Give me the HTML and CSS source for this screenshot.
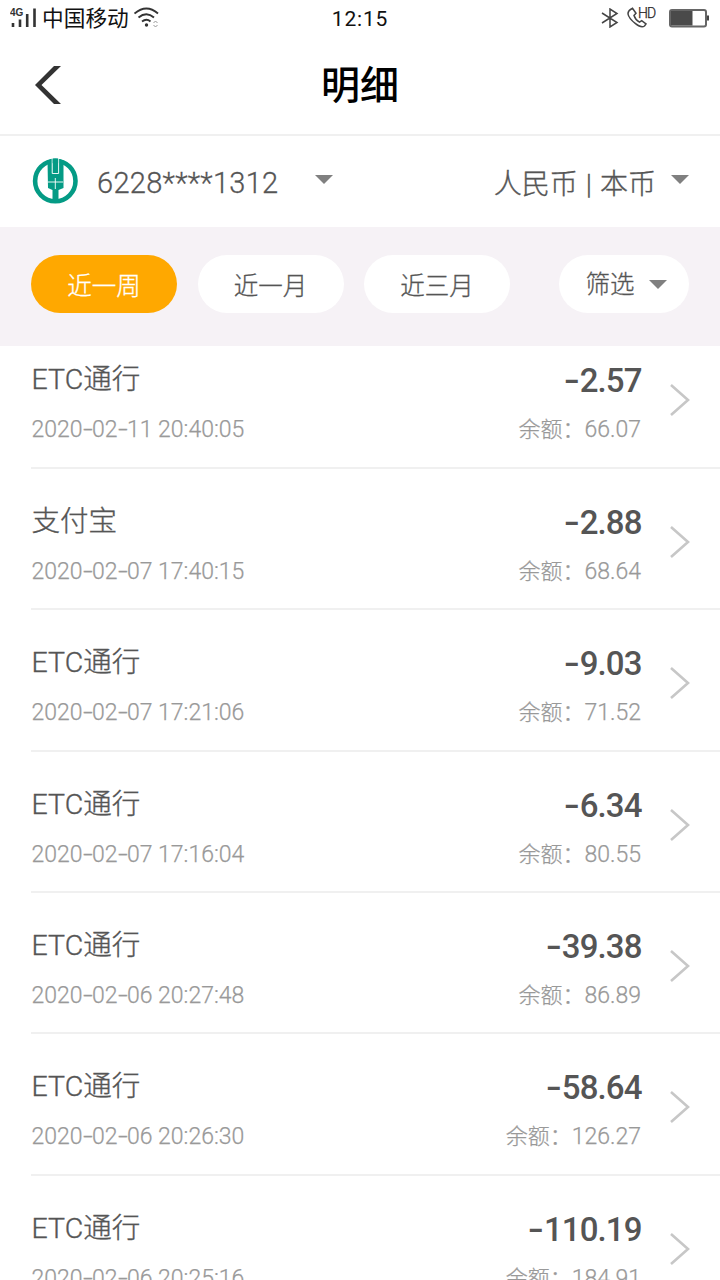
FILE: index.html
```html
<!DOCTYPE html>
<html lang="zh-CN">
<head>
<meta charset="utf-8">
<title>明细</title>
<link rel="stylesheet" href="styles.css">
</head>
<body>
<div class="screen">
  <div class="status">
    <div class="status-left">
      <svg class="signal" width="28" height="22" viewBox="0 0 28 22"><text class="net" x="0" y="8.500">4G</text><path d="M3 16v4M10 12.500v7.500M17.200 7v13M24.500 1.500v18.500" stroke="#333" stroke-width="2.600"/></svg>
      <span class="carrier">中国移动</span>
      <svg class="wifi" width="26" height="22" viewBox="0 0 26 22" fill="none" stroke="#333" stroke-width="1.900"><path d="M.5 6.500Q12.500-3.500 24 6.500M4.500 10.500Q12.500 4 20 10.500M8 14.500Q12.500 11 16.500 14.500"/><circle cx="12.500" cy="18" r="1.700" fill="#333" stroke="none"/><path d="M19.500 16l2-2 2 2M19.500 18l2 2 2-2" stroke="#999" stroke-width="1"/></svg>
    </div>
    <span class="clock">12:15</span>
    <div class="status-right">
      <svg class="bluetooth" width="18" height="20" viewBox="0 0 18 20" fill="none" stroke="#444" stroke-width="1.500"><path d="M1 5l15 9.500-7 4.500V1l7 4.500L1 15"/></svg>
      <svg class="call" width="29" height="22" viewBox="0 0 29 22"><path d="M3.500 2.500l2-1.200 3.500 5-2 2.200c1 3 2.500 5 5.500 6.700l2.200-1.500 4.300 3.300-1.500 2c-2 1.500-5.500.5-9-2.300S1.500 10 1 7c0-2 .8-3.500 2.500-4.500z" fill="none" stroke="#444" stroke-width="1.500"/><text class="hd" x="11" y="11">HD</text></svg>
      <svg class="battery" width="41" height="19" viewBox="0 0 41 19"><rect x="1" y="1" width="36" height="16.500" rx="2" fill="#fff" stroke="#666" stroke-width="2"/><path d="M2 2h21.500v14.500H2z" fill="#4a4a4a"/><path d="M38 6.500h2v5h-2z" fill="#444"/></svg>
    </div>
  </div>

  <header class="header">
    <svg class="back" width="28" height="40" viewBox="0 0 28 40"><path d="M20 1h7L7.500 20 27 39h-7L1 20z" fill="#333"/></svg>
    <h1 class="title">明细</h1>
  </header>

  <div class="account">
    <svg class="logo" width="46" height="46" viewBox="0 0 46 46"><circle cx="23.300" cy="23" r="20.200" fill="none" stroke="#049b85" stroke-width="4.600"/><path d="M15.500 2.500l4.500-1.700V15h6.600V.8l4.900 1.700V30l-5 2V44h-6V32l-4.500-2z" fill="#049b85"/><path d="M20.200 0v15.500h6.400V0M23.300 20v11M16 24h15" fill="none" stroke="#fff" stroke-width=".9"/><path d="M20.700.5h5.400V15h-5.400z" fill="#049b85"/></svg>
    <span class="card-no">6228****1312</span>
    <svg class="caret" width="18" height="9" viewBox="0 0 18 9"><path d="M0 0h18L9 9z"/></svg>
    <span class="currency">人民币 | 本币</span>
    <svg class="caret" width="18" height="9" viewBox="0 0 18 9"><path d="M0 0h18L9 9z"/></svg>
  </div>

  <nav class="filters">
    <span class="pill active">近一周</span>
    <span class="pill">近一月</span>
    <span class="pill">近三月</span>
    <span class="pill select"><span class="select-label">筛选</span><svg class="caret" width="18" height="9" viewBox="0 0 18 9"><path d="M0 0h18L9 9z"/></svg></span>
  </nav>

  <main class="list">
    <div class="row"><div class="info"><span class="name">ETC通行</span><span class="time">2020<i class="dash">-</i>02<i class="dash">-</i>11 20:40:05</span></div><div class="sum"><span class="amount"><i class="dash">-</i>2.57</span><span class="balance">余额：<span class="num">66.07</span></span></div><svg class="go" width="20" height="32" viewBox="0 0 20 32"><path d="M1 1l17 15L1 31"/></svg></div>
    <div class="row"><div class="info"><span class="name">支付宝</span><span class="time">2020<i class="dash">-</i>02<i class="dash">-</i>07 17:40:15</span></div><div class="sum"><span class="amount"><i class="dash">-</i>2.88</span><span class="balance">余额：<span class="num">68.64</span></span></div><svg class="go" width="20" height="32" viewBox="0 0 20 32"><path d="M1 1l17 15L1 31"/></svg></div>
    <div class="row"><div class="info"><span class="name">ETC通行</span><span class="time">2020<i class="dash">-</i>02<i class="dash">-</i>07 17:21:06</span></div><div class="sum"><span class="amount"><i class="dash">-</i>9.03</span><span class="balance">余额：<span class="num">71.52</span></span></div><svg class="go" width="20" height="32" viewBox="0 0 20 32"><path d="M1 1l17 15L1 31"/></svg></div>
    <div class="row"><div class="info"><span class="name">ETC通行</span><span class="time">2020<i class="dash">-</i>02<i class="dash">-</i>07 17:16:04</span></div><div class="sum"><span class="amount"><i class="dash">-</i>6.34</span><span class="balance">余额：<span class="num">80.55</span></span></div><svg class="go" width="20" height="32" viewBox="0 0 20 32"><path d="M1 1l17 15L1 31"/></svg></div>
    <div class="row"><div class="info"><span class="name">ETC通行</span><span class="time">2020<i class="dash">-</i>02<i class="dash">-</i>06 20:27:48</span></div><div class="sum"><span class="amount"><i class="dash">-</i>39.38</span><span class="balance">余额：<span class="num">86.89</span></span></div><svg class="go" width="20" height="32" viewBox="0 0 20 32"><path d="M1 1l17 15L1 31"/></svg></div>
    <div class="row"><div class="info"><span class="name">ETC通行</span><span class="time">2020<i class="dash">-</i>02<i class="dash">-</i>06 20:26:30</span></div><div class="sum"><span class="amount"><i class="dash">-</i>58.64</span><span class="balance">余额：<span class="num">126.27</span></span></div><svg class="go" width="20" height="32" viewBox="0 0 20 32"><path d="M1 1l17 15L1 31"/></svg></div>
    <div class="row"><div class="info"><span class="name">ETC通行</span><span class="time">2020<i class="dash">-</i>02<i class="dash">-</i>06 20:25:16</span></div><div class="sum"><span class="amount"><i class="dash">-</i>110.19</span><span class="balance">余额：<span class="num">184.91</span></span></div><svg class="go" width="20" height="32" viewBox="0 0 20 32"><path d="M1 1l17 15L1 31"/></svg></div>
  </main>
</div>
</body>
</html>
```
FILE: styles.css
```css
* { box-sizing: border-box; }
body { margin: 0; background: #fff; }
svg { display: block; flex: none; }
.screen {
  display: flex;
  flex-direction: column;
  width: 720px;
  height: 1280px;
  overflow: hidden;
  background: #fff;
  color: #555;
  font-family: Roboto, "Noto Sans CJK SC", sans-serif;
  white-space: nowrap;
}

.status {
  display: grid;
  grid-template-columns: 1fr auto 1fr;
  align-items: center;
  height: 38px;
  flex: none;
  padding: 0 10px;
  color: #111;
}
.status-left, .status-right { display: flex; align-items: center; }
.status-left { margin-top: -2px; }
.status-right { justify-content: flex-end; }
.net { font: bold 10px "Liberation Sans", sans-serif; fill: #333; }
.hd { font: 300 14px Roboto, sans-serif; letter-spacing: -.9px; fill: #222; stroke: #333; stroke-width: .3px; }
.carrier { margin: 2px 0 0 4px; font-size: 21.700px; line-height: 38px; }
.wifi { margin-left: 5px; }
.clock { font-size: 21px; letter-spacing: .8px; line-height: 38px; }
.call { margin: -2px 0 0 8px; }
.bluetooth { margin-top: -3px; }
.battery { margin: -2px 0 0 13px; }

.header {
  display: grid;
  grid-template-columns: 1fr auto 1fr;
  align-items: center;
  height: 98px;
  flex: none;
  padding: 0 34px 2px;
  border-bottom: 2px solid #f0f0f0;
}
.title { margin: 2px 0 0; color: #000; font-size: 39px; font-weight: 500; line-height: 60px; }

.account {
  display: flex;
  align-items: center;
  height: 91px;
  flex: none;
  padding: 0 31px 0 32px;
}
.logo { margin-top: -1px; }
.card-no { width: 218px; margin: 3px 0 0 19px; font-size: 29px; font-weight: 300; letter-spacing: .3px; -webkit-text-stroke: .3px #555; }
.account .caret { margin-top: -4px; }
.caret { fill: #808080; }
.currency { margin: 1px 15px 0 auto; font-size: 28px; font-weight: 300; word-spacing: 1.200px; -webkit-text-stroke: .35px #555; }

.filters {
  display: flex;
  align-items: center;
  gap: 20.500px;
  height: 119px;
  flex: none;
  padding: 0 31px 5px;
  background: #f6f2f6;
}
.pill {
  display: flex;
  align-items: center;
  justify-content: center;
  width: 146px;
  height: 58px;
  border-radius: 29px;
  background: #fff;
  font-size: 24.500px;
  font-weight: 300;
  -webkit-text-stroke: .3px;
}
.active { background: #ffa800; color: #fff; }
.select { gap: 14px; width: 130px; margin-left: auto; padding: 0 0 0 4px; }
.select-label { margin-top: -4px; }

.list { flex: 1; min-height: 0; overflow: hidden; }
.row {
  display: flex;
  height: 141.340px;
  margin-left: 31px;
  padding: 33px 30px 0 0;
  border-bottom: 2px solid #f0f0f0;
}
.row:first-child { margin-top: -19px; height: 142px; }
.info, .sum { display: flex; flex-direction: column; gap: 10px; }
.info { margin-left: .6px; }
.sum { align-items: flex-end; margin-left: auto; }
.name { height: 40px; font-size: 28.500px; font-weight: 300; line-height: 40px; -webkit-text-stroke: .35px #555; }
.time { height: 40px; color: #999; font-size: 23px; font-weight: 300; line-height: 40px; -webkit-text-stroke: .25px #999; }
.dash { display: inline-block; width: .41em; font-style: normal; transform: scaleX(1.5); transform-origin: 0 50%; }
.amount { height: 40px; font-size: 33px; font-weight: 500; line-height: 42px; letter-spacing: -.9px; margin-right: -.5px; }
.amount .dash { width: .47em; transform: scaleX(1.4); }
.balance { height: 40px; color: #999; font-size: 22px; font-weight: 300; line-height: 39px; -webkit-text-stroke: .25px #999; }
.num { font-size: 23px; }
.go { margin: 24px 0 0 29px; fill: none; stroke: #c7c7c7; stroke-width: 2.600; }
```
